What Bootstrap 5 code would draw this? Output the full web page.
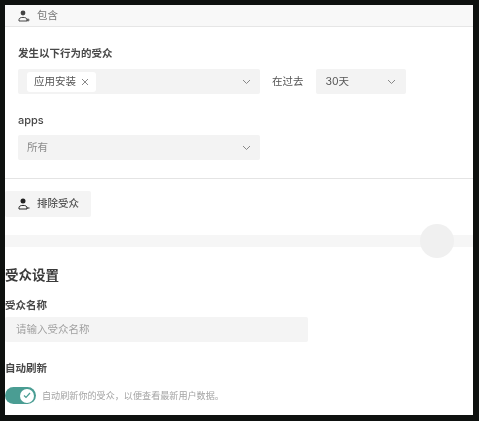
<!DOCTYPE html>
<html lang="zh-CN">
  <head>
    <meta charset="UTF-8" />
    <meta name="viewport" content="width=device-width, initial-scale=1" />
    <title>受众设置</title>
    <link
      href="https://cdn.jsdelivr.net/npm/bootstrap@5.3.0/dist/css/bootstrap.min.css"
      rel="stylesheet"
    />
    <style>
      html,
      body {
        height: 421px;
        overflow: hidden;
      }

      body {
        background: #0e110f;
        padding: 5px 6px 6px 5px;
        font-family: "Inter", "Noto Sans CJK SC", sans-serif;
        font-size: 10.5px;
        color: #555;
      }

      .screen {
        height: 410px;
        background: #fff;
        filter: blur(0.4px);
        overflow: hidden;
      }

      .rule-head {
        height: 22px;
        background: #f8f8f8;
        border-bottom: 1px solid #e6e6e6;
        padding-left: 13px;
        gap: 7px;
        font-size: 10.5px;
        color: #777;
      }

      .rule-body {
        height: 152px;
        padding: 20px 0 0 13px;
        border-bottom: 1px solid #e4e4e4;
      }

      .field-label {
        font-size: 10.5px;
        font-weight: 600;
        color: #484848;
        line-height: 14px;
      }

      .apps-label {
        margin-top: 19px;
        font-size: 11px;
        font-weight: 500;
      }

      .refresh-label {
        margin-top: 20px;
      }

      .fake-select {
        height: 25px;
        background: #f3f3f3;
        border-radius: 2px;
        color: #555;
      }

      .select-wide {
        width: 242px;
        padding: 0 9px;
      }

      .select-days {
        width: 90px;
        padding: 0 10px;
      }

      .tag-chip {
        height: 20px;
        background: #fff;
        border-radius: 3px;
        padding: 0 7px;
        gap: 5px;
      }

      .muted-value {
        color: #8c8c8c;
      }

      .exclude-btn {
        width: 86px;
        height: 26px;
        margin-top: 12px;
        padding-left: 13px;
        gap: 7px;
        background: #f4f4f4;
        border-radius: 2px;
        color: #555;
        font-weight: 500;
      }

      .band-wrap {
        height: 12px;
        margin-top: 18px;
        background: #f6f6f6;
      }

      .band-knob {
        position: absolute;
        right: 19px;
        top: -11px;
        width: 34px;
        height: 34px;
        border-radius: 50%;
        background: #f0f0f0;
      }

      .section-title {
        margin-top: 19px;
        font-size: 13.5px;
        font-weight: 600;
        line-height: 18px;
        color: #3a3a3a;
      }

      .name-label {
        margin-top: 15px;
      }

      .name-input {
        width: 303px;
        height: 25px;
        margin-top: 4px;
        background: #f4f4f4;
        padding-left: 11px;
        border-radius: 2px;
        color: #a0a0a0;
      }

      .toggle-row {
        margin-top: 11px;
        gap: 6px;
      }

      .toggle-pill {
        width: 31px;
        height: 17px;
        border-radius: 9px;
        background: #4a9d93;
        padding-right: 2px;
      }

      .toggle-dot {
        width: 14px;
        height: 14px;
        border-radius: 50%;
        background: #fff;
      }

      .toggle-note {
        font-size: 9.1px;
        color: #a3a3a3;
      }

      .soft-arrow {
        color: #888;
      }
    </style>
  </head>

  <body>
    <div class="screen">
      <!-- include rule -->
      <div class="rule-head d-flex align-items-center">
        <svg width="12" height="12" viewBox="0 0 12 12">
          <circle cx="5" cy="3" r="2.4" fill="#444" />
          <path d="M1 11V9.6C1 8.2 2.6 7.4 5 7.4s4 .8 4 2.2V11Z" fill="none" stroke="#444" />
          <path d="M8.5 10h3M10 8.5v3" stroke="#444" />
        </svg>
        <span>包含</span>
      </div>

      <div class="rule-body">
        <div class="field-label mb-2">发生以下行为的受众</div>
        <div class="d-flex align-items-center">
          <div class="fake-select select-wide d-flex align-items-center justify-content-between">
            <span class="tag-chip d-inline-flex align-items-center">
              应用安装
              <svg width="8" height="8" viewBox="0 0 8 8">
                <path d="M1 1l6 6M7 1L1 7" stroke="#888" />
              </svg>
            </span>
            <svg class="soft-arrow" width="9" height="6" viewBox="0 0 9 6">
              <path d="M1 1l3.5 3.5L8 1" fill="none" stroke="currentColor" />
            </svg>
          </div>
          <span class="ms-2 ps-1 me-2 pe-1">在过去</span>
          <div class="fake-select select-days d-flex align-items-center justify-content-between">
            <span>30天</span>
            <svg class="soft-arrow" width="9" height="6" viewBox="0 0 9 6">
              <path d="M1 1l3.5 3.5L8 1" fill="none" stroke="currentColor" />
            </svg>
          </div>
        </div>

        <div class="field-label apps-label">apps</div>
        <div class="fake-select select-wide d-flex align-items-center justify-content-between mt-2">
          <span class="muted-value">所有</span>
          <svg class="soft-arrow" width="9" height="6" viewBox="0 0 9 6">
            <path d="M1 1l3.5 3.5L8 1" fill="none" stroke="currentColor" />
          </svg>
        </div>
      </div>

      <!-- exclude button -->
      <div class="exclude-btn d-flex align-items-center">
        <svg width="12" height="12" viewBox="0 0 12 12">
          <circle cx="5" cy="3" r="2.5" fill="#222" />
          <path d="M1 11V9.6C1 8.2 2.6 7.4 5 7.4s4 .8 4 2.2V11Z" fill="none" stroke="#222" />
          <path d="M8.5 10h3" stroke="#222" />
        </svg>
        <span>排除受众</span>
      </div>

      <div class="band-wrap position-relative">
        <div class="band-knob"></div>
      </div>

      <!-- settings -->
      <div class="section-title">受众设置</div>
      <div class="field-label name-label">受众名称</div>
      <div class="name-input d-flex align-items-center">请输入受众名称</div>

      <div class="field-label refresh-label">自动刷新</div>
      <div class="toggle-row d-flex align-items-center">
        <div class="toggle-pill d-flex align-items-center justify-content-end">
          <span class="toggle-dot d-flex align-items-center justify-content-center">
            <svg width="8" height="7" viewBox="0 0 8 7">
              <path d="M1 3.5l2 2L7 1" fill="none" stroke="#4a9d93" stroke-width="1.2" />
            </svg>
          </span>
        </div>
        <span class="toggle-note">自动刷新你的受众，以便查看最新用户数据。</span>
      </div>
    </div>

    <script src="https://cdn.jsdelivr.net/npm/bootstrap@5.3.0/dist/js/bootstrap.bundle.min.js"></script>
  </body>
</html>
